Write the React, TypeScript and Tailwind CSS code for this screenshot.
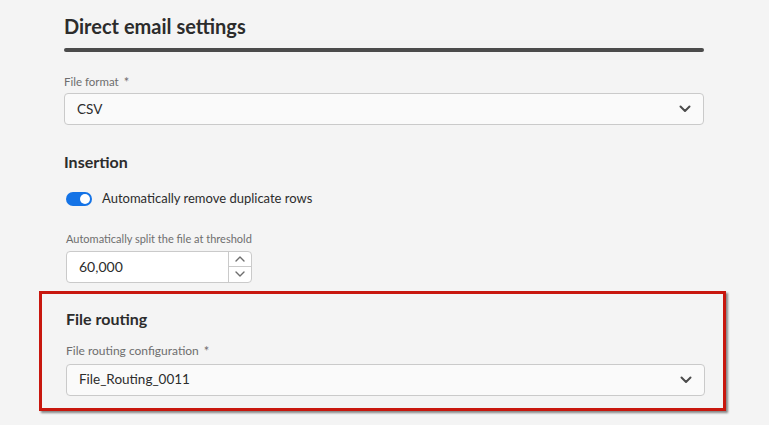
import React from "react";

function Chevron({ className = "" }: { className?: string }) {
  return (
    <svg width="12" height="8" viewBox="0 0 12 8" className={className}>
      <path d="M1.5 1.5 L6 6 L10.5 1.5" fill="none" stroke="#4b4b4b" strokeWidth="2" strokeLinecap="round" strokeLinejoin="round" />
    </svg>
  );
}

function SmallChevron({ up = false }: { up?: boolean }) {
  return (
    <svg width="10" height="6" viewBox="0 0 10 6">
      <path
        d={up ? "M1 5 L5 1 L9 5" : "M1 1 L5 5 L9 1"}
        fill="none"
        stroke="#6e6e6e"
        strokeWidth="1.4"
        strokeLinecap="round"
        strokeLinejoin="round"
      />
    </svg>
  );
}

function Label({ text, required = false, size = "text-[12px]" }: { text: string; required?: boolean; size?: string }) {
  return (
    <div className={`${size} leading-[16px] text-[#6e6e6e] flex items-center gap-[5px]`}>
      <span>{text}</span>
      {required && <span className="text-[13px] text-[#6e6e6e]">*</span>}
    </div>
  );
}

function Select({ value }: { value: string }) {
  return (
    <div className="h-[32px] w-full bg-[#fafafa] border border-[#cacaca] rounded-[4px] flex items-center justify-between pl-[12px] pr-[12px]">
      <span className="text-[13.5px] text-[#2c2c2c]">{value}</span>
      <Chevron />
    </div>
  );
}

export default function App() {
  return (
    <div className="min-h-screen bg-[#f4f4f4] font-['Lato',sans-serif] pl-[64px] pr-[65px] pt-[12px]">
      <h1 className="text-[20px] leading-[28px] font-bold text-[#2c2c2c]">Direct email settings</h1>
      <div className="mt-[8px] h-[4px] bg-[#4b4b4b] rounded-full" />

      <div className="mt-[22px]">
        <Label text="File format" required size="text-[11.5px]" />
        <div className="mt-[3px]">
          <Select value="CSV" />
        </div>
      </div>

      <h2 className="mt-[26px] text-[16px] leading-[22px] font-bold text-[#2c2c2c]">Insertion</h2>

      <div className="mt-[16px] flex items-center gap-[10px] pl-[2px]">
        <div className="w-[26px] h-[14px] rounded-full bg-[#1473e6] relative">
          <div className="absolute right-[2px] top-[2px] w-[10px] h-[10px] rounded-full bg-white" />
        </div>
        <span className="text-[13px] text-[#2c2c2c]">Automatically remove duplicate rows</span>
      </div>

      <div className="mt-[22px] pl-[2px]">
        <Label text="Automatically split the file at threshold" size="text-[11px]" />
        <div className="mt-[4px] w-[186px] h-[32px] bg-white border border-[#cacaca] rounded-[4px] flex">
          <div className="flex-1 flex items-center pl-[12px] text-[14px] text-[#2c2c2c]">60,000</div>
          <div className="w-[23px] border-l border-[#cacaca] flex flex-col">
            <div className="flex-1 flex items-center justify-center border-b border-[#cacaca]">
              <SmallChevron up />
            </div>
            <div className="flex-1 flex items-center justify-center">
              <SmallChevron />
            </div>
          </div>
        </div>
      </div>

      <div className="mt-[8px] -ml-[25px] -mr-[22px] border-[3px] border-[#c8170e] shadow-[2px_2px_2px_rgba(0,0,0,0.45)] pl-[24px] pr-[18px] pt-[14px] pb-[12px]">
        <h2 className="text-[16px] leading-[22px] font-bold text-[#2c2c2c]">File routing</h2>
        <div className="mt-[13px]">
          <Label text="File routing configuration" required />
          <div className="mt-[5px]">
            <Select value="File_Routing_0011" />
          </div>
        </div>
      </div>
    </div>
  );
}
